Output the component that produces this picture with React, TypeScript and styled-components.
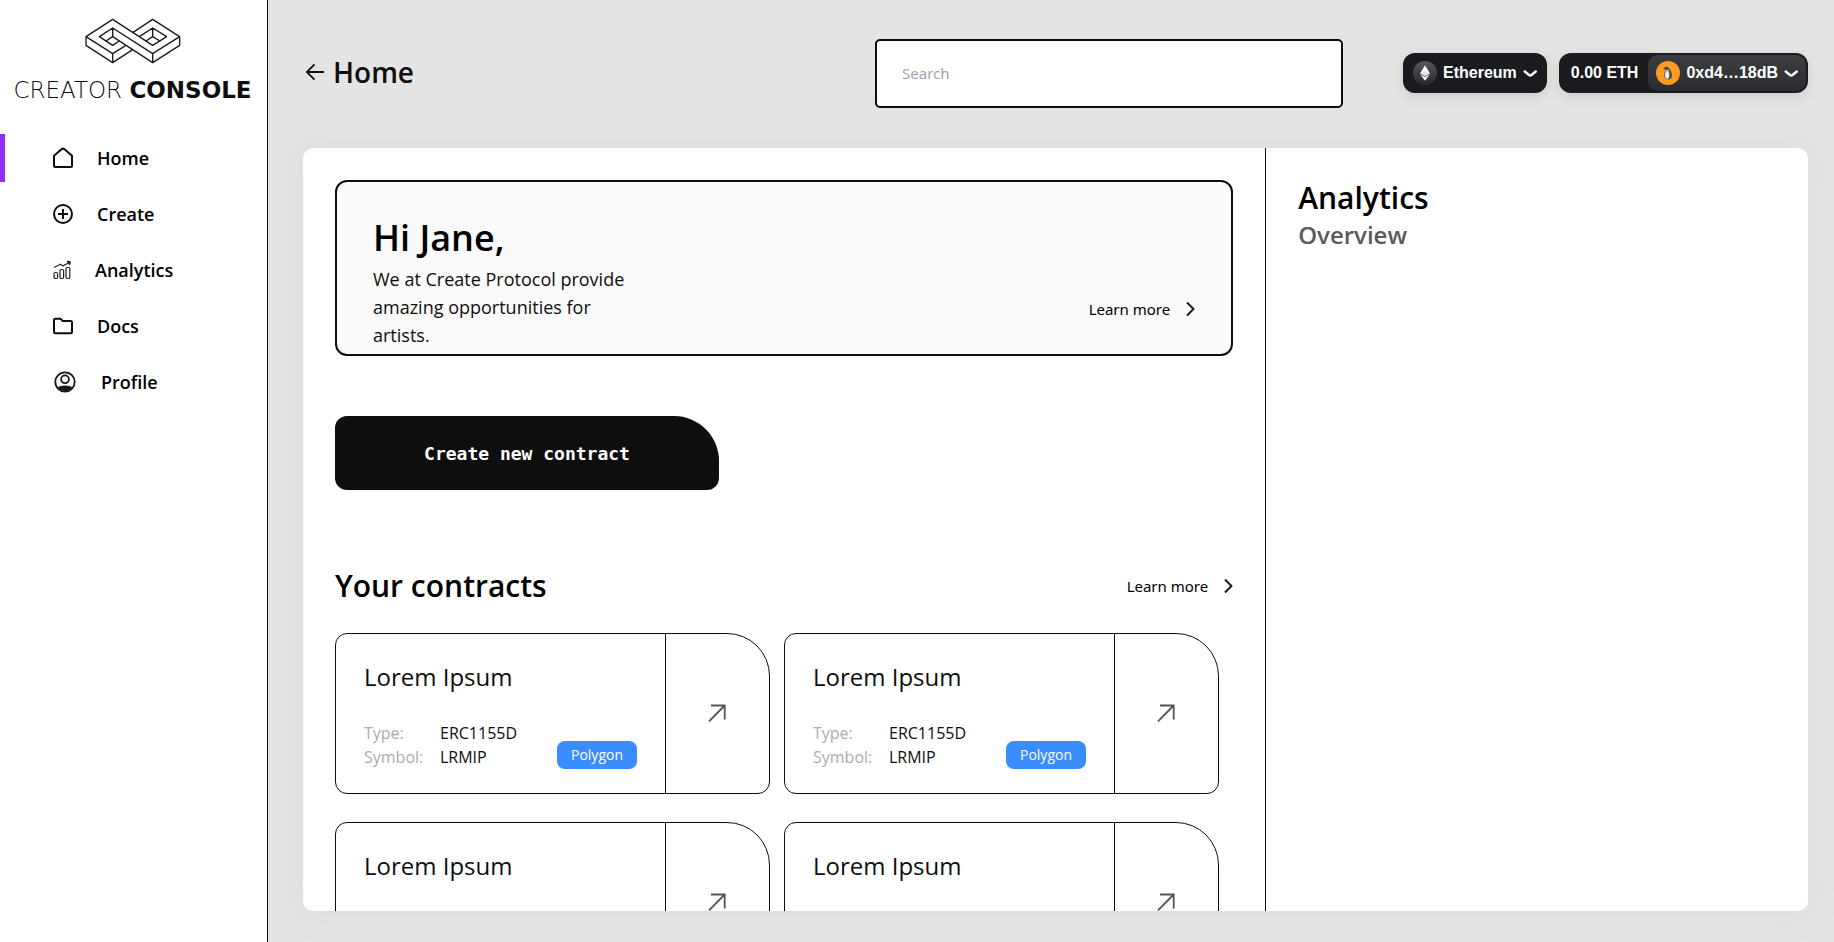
import React from 'react';
import styled, { createGlobalStyle } from 'styled-components';

const ink = '#0e0e0e';
const sans = '"Open Sans", "Noto Sans", sans-serif';
const ui = '"Noto Sans", "Open Sans", sans-serif';
const mono = '"DejaVu Sans Mono", "Liberation Mono", monospace';
const wallet = '"Liberation Sans", Arial, sans-serif';

const GlobalStyle = createGlobalStyle`
  *, *::before, *::after { box-sizing: border-box; }
  body { margin: 0; background: #e4e4e4; color: ${ink}; font-family: ${sans}; }
  h1, h2, h3, p, dl, dd, ul { margin: 0; padding: 0; }
  a { color: inherit; text-decoration: none; }
  button, input { font: inherit; }
  svg { display: block; flex: none; }
`;

const Shell = styled.div`
  display: flex;
  height: 100vh;
`;

const Sidebar = styled.aside`
  flex: 0 0 268px;
  padding-top: 18px;
  background: #fff;
  border-right: 1px solid ${ink};
`;

const Brand = styled.a`
  display: flex;
  flex-direction: column;
  align-items: center;
  gap: 14px;
  padding-right: 2px;
  margin-bottom: 32px;
`;

const Wordmark = styled.span`
  font-family: 'DejaVu Sans', sans-serif;
  font-size: 23px;
  font-weight: 200;
  line-height: 24px;
  white-space: nowrap;
  strong { font-weight: 700; }
`;

const NavList = styled.ul`
  display: flex;
  flex-direction: column;
  gap: 8px;
  list-style: none;
`;

const NavLink = styled.a<{ $active?: boolean }>`
  display: flex;
  align-items: center;
  gap: 24px;
  height: 48px;
  padding-left: 48px;
  border-left: 5px solid ${(p) => (p.$active ? '#8f2fff' : 'transparent')};
  color: #000;
  font-size: 18px;
  font-weight: 600;
  line-height: 24px;
`;

const Main = styled.main`
  flex: 1;
  min-width: 0;
  display: flex;
  flex-direction: column;
  gap: 40px;
  padding: 39px 26px 31px 35px;
`;

const TopBar = styled.header`
  display: flex;
  align-items: center;
`;

const BackLink = styled.a`
  display: flex;
  align-items: center;
  gap: 8px;
  padding: 0 0 3px 2px;
  margin-right: auto;
`;

const PageTitle = styled.h1`
  font-size: 28px;
  font-weight: 600;
  line-height: 36px;
`;

const SearchBox = styled.input`
  flex: 0 1 468px;
  min-width: 160px;
  height: 69px;
  margin: 0 60px 0 24px;
  padding: 0 25px 2px;
  border: 2px solid ${ink};
  border-radius: 5px;
  background: #fff;
  font-family: ${ui};
  font-size: 15px;
  outline: none;
  &::placeholder { color: #9ca3af; opacity: 1; }
`;

const WalletGroup = styled.div`
  display: flex;
  gap: 12px;
  padding-bottom: 1px;
`;

const WalletButton = styled.button<{ $split?: boolean }>`
  display: flex;
  align-items: center;
  gap: ${(p) => (p.$split ? 10 : 6)}px;
  height: 40px;
  padding: ${(p) => (p.$split ? '0 2px 0 12px' : '0 10px')};
  border: 0;
  border-radius: 12px;
  background: #1a1b1f;
  color: #fff;
  box-shadow: 0 4px 12px rgba(0, 0, 0, 0.1);
  font-family: ${wallet};
  font-size: 16px;
  font-weight: 700;
  line-height: 20px;
  white-space: nowrap;
  cursor: pointer;
`;

const Account = styled.span`
  display: flex;
  align-items: center;
  gap: 6px;
  height: 36px;
  padding: 0 8px;
  border-radius: 10px;
  background: linear-gradient(#3c3d41, #2b2c30);
`;

const Panel = styled.div`
  flex: 1;
  min-height: 0;
  display: flex;
  overflow: hidden;
  border-radius: 10px;
  background: #fff;
  box-shadow: 0 0 24px rgba(207, 216, 225, 0.5);
`;

const Feed = styled.section`
  flex: 0 0 64%;
  min-width: 0;
  padding: 32px;
  border-right: 1px solid ${ink};
  overflow-y: auto;
  scrollbar-width: none;
`;

const Aside = styled.section`
  flex: 1;
  min-width: 0;
  padding: 32px;
`;

const SectionTitle = styled.h2`
  color: #000;
  font-size: 30px;
  font-weight: 600;
  line-height: 36px;
`;

const Subtitle = styled.h3`
  margin-top: 3px;
  color: #5a5a5a;
  font-size: 24px;
  font-weight: 600;
  line-height: 32px;
`;

const Welcome = styled.div`
  display: flex;
  align-items: flex-end;
  justify-content: space-between;
  padding: 34px 36px 5px;
  border: 2px solid ${ink};
  border-radius: 12px;
  background: #fafafa;
`;

const Greeting = styled.h2`
  margin-bottom: 5px;
  color: #000;
  font-size: 36px;
  font-weight: 600;
  line-height: 44px;
`;

const Intro = styled.p`
  max-width: 264px;
  font-size: 18px;
  line-height: 28px;
`;

const MoreLink = styled.a<{ $raised?: boolean }>`
  display: flex;
  align-items: center;
  gap: 16px;
  margin-bottom: ${(p) => (p.$raised ? 28 : 0)}px;
  color: #000;
  font-family: ${ui};
  font-size: 15px;
  line-height: 24px;
  white-space: nowrap;
`;

const CreateButton = styled.button`
  display: block;
  width: 384px;
  max-width: 100%;
  height: 74px;
  margin: 60px 0 78px;
  border: 0;
  border-radius: 12px 45px 12px 12px;
  background: ${ink};
  color: #fff;
  font-family: ${mono};
  font-size: 18px;
  font-weight: 700;
  cursor: pointer;
`;

const SectionHead = styled.div`
  display: flex;
  align-items: center;
  justify-content: space-between;
  margin-bottom: 29px;
`;

const CardGrid = styled.div`
  display: grid;
  grid-template-columns: repeat(2, minmax(0, 435px));
  gap: 28px 14px;
`;

const Card = styled.article`
  display: flex;
  border: 1px solid ${ink};
  border-radius: 12px 43px 12px 12px;
`;

const CardBody = styled.div`
  flex: 1;
  min-width: 0;
  padding: 27px 28px 24px;
`;

const CardTitle = styled.h3`
  margin-bottom: 28px;
  font-size: 24px;
  font-weight: 400;
  line-height: 32px;
`;

const CardFoot = styled.div`
  display: flex;
  align-items: flex-end;
  justify-content: space-between;
`;

const Meta = styled.dl`
  display: grid;
  grid-template-columns: 76px auto;
  font-size: 16px;
  line-height: 24px;
  dt { color: #acacac; }
`;

const Chain = styled.span`
  padding: 0 14px;
  border-radius: 8px;
  background: #3a8dff;
  color: #fff;
  font-size: 14px;
  line-height: 28px;
`;

const CardAction = styled.a`
  flex: 0 0 104px;
  display: grid;
  place-items: center;
  padding: 0 2px 1px 0;
  border-left: 1px solid ${ink};
`;

const Logo = () => (
  <svg width="96" height="46" viewBox="255 53 288 138" fill="none" stroke="#1a1a1a" strokeWidth="4" strokeLinejoin="round" strokeLinecap="round" aria-hidden="true">
    <path d="M338 57 258 109V135L338 187 398 148M338 57 458 135 500 109 458 83 418 109M338 160 378 135M258 109 338 160V187M338 83 458 160V187M338 83 298 109 338 135 358 122M338 83V109L458 187 539 135V109L458 57 398 97M338 109 318 122M458 160 539 109M458 83V109L438 122M458 109 480 122" />
  </svg>
);

const HomeIcon = () => (
  <svg width="20" height="22" viewBox="0 0 20 22" fill="none" stroke={ink} strokeWidth="2" strokeLinejoin="round" aria-hidden="true">
    <path d="M1 8.8 8.8 2.1a1.9 1.9 0 0 1 2.4 0L19 8.8V18.500a1.500 1.500 0 0 1-1.500 1.500h-15A1.500 1.500 0 0 1 1 18.500Z" />
  </svg>
);

const CreateIcon = () => (
  <svg width="20" height="20" viewBox="0 0 20 20" fill="none" stroke={ink} strokeWidth="2" aria-hidden="true">
    <circle cx="10" cy="10" r="9" />
    <path d="M10 5v10M5 10h10" />
  </svg>
);

const AnalyticsIcon = () => (
  <svg width="18" height="20" viewBox="0 0 18 20" fill="none" stroke="#222" strokeWidth="1.200" strokeLinejoin="round" aria-hidden="true">
    <rect x="1" y="12.500" width="3.600" height="6" rx="1.200" />
    <rect x="7" y="9.500" width="3.600" height="9" rx="1.200" />
    <rect x="13" y="7.500" width="3.800" height="11" rx="1.200" />
    <path d="M1 7.500 7.500 4.200 10 6l6-3.500" />
    <path d="m14.500 1.200 3 .8-1 2.600Z" fill="#222" />
  </svg>
);

const DocsIcon = () => (
  <svg width="20" height="18" viewBox="0 0 20 18" fill="none" stroke={ink} strokeWidth="2" strokeLinejoin="round" aria-hidden="true">
    <path d="M1 3A1.200 1.200 0 0 1 2.200 1.800H7.500L9.800 4H17.800A1.200 1.200 0 0 1 19 5.200V15A1.200 1.200 0 0 1 17.800 16.200H2.200A1.200 1.200 0 0 1 1 15Z" />
  </svg>
);

const ProfileIcon = () => (
  <svg width="24" height="24" viewBox="0 0 24 24" fill="none" stroke="#1a1a1a" strokeWidth="1.800" aria-hidden="true">
    <circle cx="12" cy="12" r="9.700" />
    <circle cx="12" cy="9.300" r="3.900" />
    <path d="M5.500 18.600C7.200 16 16.800 16 18.500 18.600 15 22.300 9 22.300 5.500 18.600Z" fill="#1a1a1a" stroke="none" />
    <path d="M5.300 18.300C7.500 15.900 16.500 15.900 18.700 18.300" />
  </svg>
);

const BackArrow = () => (
  <svg width="20" height="20" viewBox="0 0 20 20" fill="none" stroke={ink} strokeWidth="1.800" aria-hidden="true">
    <path d="M19 10H2M9.500 2.300 1.800 10l7.700 7.700" />
  </svg>
);

const EthereumIcon = () => (
  <svg width="24" height="24" viewBox="0 0 28 28" aria-hidden="true">
    <defs>
      <linearGradient id="eth-disc" x1="0" y1="0" x2="0" y2="1">
        <stop offset="0" stopColor="#55585d" />
        <stop offset="1" stopColor="#25292e" />
      </linearGradient>
    </defs>
    <circle cx="14" cy="14" r="14" fill="url(#eth-disc)" />
    <path d="M14 5 8.400 14.200 14 17.400l5.600-3.200Z" fill="#fff" />
    <path d="M14 11.700 8.400 14.200 14 17.400l5.600-3.200Z" fill="#e3e4e6" />
    <path d="M8.400 15.500 14 23l5.600-7.500L14 18.700Z" fill="#fff" />
  </svg>
);

const PenguinAvatar = () => (
  <svg width="24" height="24" viewBox="0 0 24 24" aria-hidden="true">
    <circle cx="12" cy="12" r="12" fill="#ff9a23" />
    <path d="M8 6.800C9 5.300 12.300 5.300 13.300 7.500 14.600 9.500 16.600 12 15.800 16c-.4 2-2 2.600-4 2.600C9.500 18.600 8.300 17 8.200 14.500 8.200 12 9.300 10 8.900 8.300L7.300 7.700Z" fill="#47515c" />
    <path d="M9.700 9.800c1.500-1 2.500-.6 3 1.200.9 2.500.9 5.500-.8 6.700-1.800.2-2.700-1-2.900-3 0-2 .8-3.200.7-4.900Z" fill="#eef1f3" />
    <path d="M9.200 8.600c1 .9 2.500.7 3.500-.2l.4 1.800c-1 .7-2.700.8-3.700 0Z" fill="#e5b440" />
    <path d="M8.500 18.300c.8-1 2.400-.9 3.200.2ZM12.300 18.500c.6-1 1.900-1 2.700-.3Z" fill="#e7a11c" />
  </svg>
);

const ChevronDown = () => (
  <svg width="14" height="7" viewBox="0 0 14 7" fill="none" stroke="#fff" strokeWidth="2.500" strokeLinecap="round" aria-hidden="true">
    <path d="M12.750 1.540 8.516 5.004a2.400 2.400 0 0 1-2.532 0L1.750 1.540" />
  </svg>
);

const ChevronRight = () => (
  <svg width="9" height="16" viewBox="0 0 9 16" fill="none" stroke="#1a1a1a" strokeWidth="2" strokeLinejoin="round" aria-hidden="true">
    <path d="m1 1.500 6.500 6.500L1 14.500" />
  </svg>
);

const OpenArrow = () => (
  <svg width="18" height="18" viewBox="0 0 18 18" fill="none" stroke="#555" strokeWidth="1.800" aria-hidden="true">
    <path d="M3 1.500H16.700V15.500M16.700 1.500 1 17.300" />
  </svg>
);

const navItems = [
  { label: 'Home', Icon: HomeIcon, active: true },
  { label: 'Create', Icon: CreateIcon },
  { label: 'Analytics', Icon: AnalyticsIcon },
  { label: 'Docs', Icon: DocsIcon },
  { label: 'Profile', Icon: ProfileIcon },
];

const contracts = [1, 2, 3, 4].map((id) => ({
  id,
  name: 'Lorem Ipsum',
  type: 'ERC1155D',
  symbol: 'LRMIP',
  chain: 'Polygon',
}));

const LearnMore = ({ raised }: { raised?: boolean }) => (
  <MoreLink href="#learn" $raised={raised}>
    Learn more
    <ChevronRight />
  </MoreLink>
);

export default function App() {
  return (
    <>
      <GlobalStyle />
      <Shell>
        <Sidebar>
          <Brand href="#home">
            <Logo />
            <Wordmark>
              CREATOR <strong>CONSOLE</strong>
            </Wordmark>
          </Brand>
          <nav>
            <NavList>
              {navItems.map(({ label, Icon, active }) => (
                <li key={label}>
                  <NavLink href={`#${label.toLowerCase()}`} $active={active}>
                    <Icon />
                    {label}
                  </NavLink>
                </li>
              ))}
            </NavList>
          </nav>
        </Sidebar>

        <Main>
          <TopBar>
            <BackLink href="#back">
              <BackArrow />
              <PageTitle>Home</PageTitle>
            </BackLink>
            <SearchBox type="search" placeholder="Search" aria-label="Search" />
            <WalletGroup>
              <WalletButton type="button">
                <EthereumIcon />
                Ethereum
                <ChevronDown />
              </WalletButton>
              <WalletButton type="button" $split>
                0.00 ETH
                <Account>
                  <PenguinAvatar />
                  0xd4…18dB
                  <ChevronDown />
                </Account>
              </WalletButton>
            </WalletGroup>
          </TopBar>

          <Panel>
            <Feed>
              <Welcome>
                <div>
                  <Greeting>Hi Jane,</Greeting>
                  <Intro>We at Create Protocol provide amazing opportunities for artists.</Intro>
                </div>
                <LearnMore raised />
              </Welcome>

              <CreateButton type="button">Create new contract</CreateButton>

              <SectionHead>
                <SectionTitle>Your contracts</SectionTitle>
                <LearnMore />
              </SectionHead>

              <CardGrid>
                {contracts.map((c) => (
                  <Card key={c.id}>
                    <CardBody>
                      <CardTitle>{c.name}</CardTitle>
                      <CardFoot>
                        <Meta>
                          <dt>Type:</dt>
                          <dd>{c.type}</dd>
                          <dt>Symbol:</dt>
                          <dd>{c.symbol}</dd>
                        </Meta>
                        <Chain>{c.chain}</Chain>
                      </CardFoot>
                    </CardBody>
                    <CardAction href="#contract" aria-label={`Open ${c.name}`}>
                      <OpenArrow />
                    </CardAction>
                  </Card>
                ))}
              </CardGrid>
            </Feed>

            <Aside>
              <SectionTitle>Analytics</SectionTitle>
              <Subtitle>Overview</Subtitle>
            </Aside>
          </Panel>
        </Main>
      </Shell>
    </>
  );
}
